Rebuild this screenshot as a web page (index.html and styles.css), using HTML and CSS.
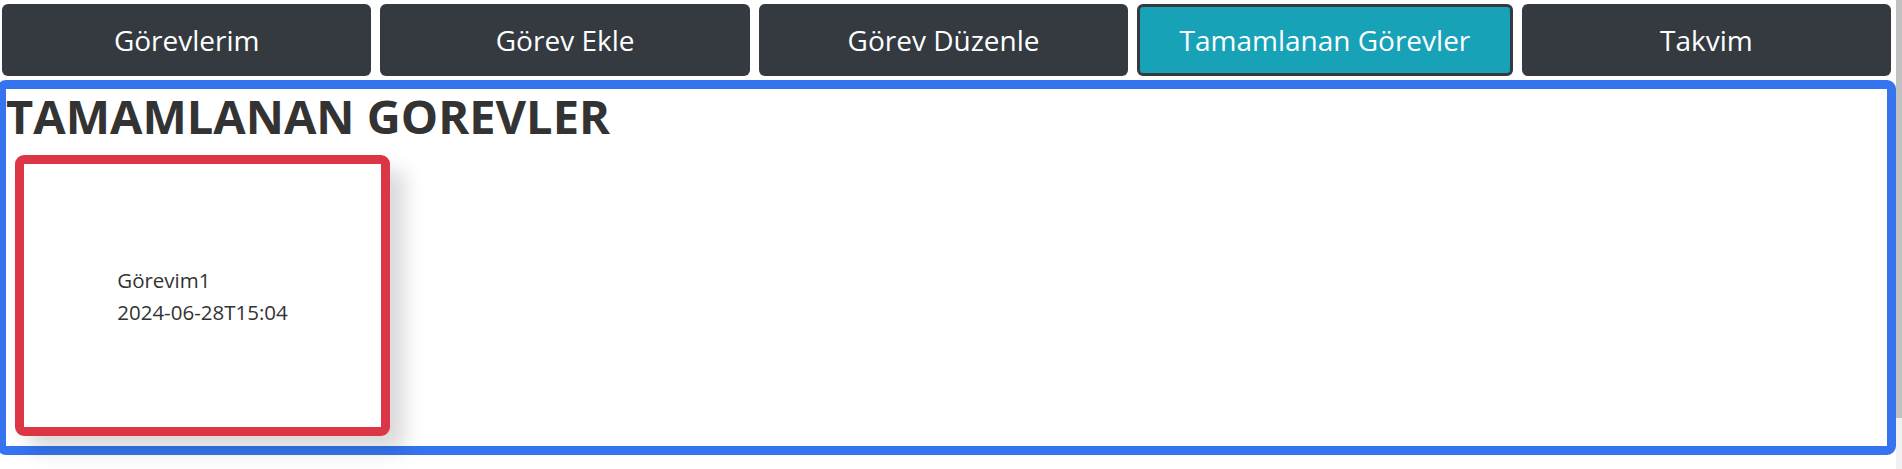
FILE: index.html
```html
<!DOCTYPE html>
<html lang="tr">
<head>
<meta charset="utf-8">
<title>Tamamlanan Görevler</title>
<link rel="stylesheet" href="styles.css">
</head>
<body>
<nav class="nav">
  <a class="nav-btn" href="#">Görevlerim</a>
  <a class="nav-btn" href="#">Görev Ekle</a>
  <a class="nav-btn" href="#">Görev Düzenle</a>
  <a class="nav-btn active" href="#">Tamamlanan Görevler</a>
  <a class="nav-btn" href="#">Takvim</a>
</nav>
<main class="panel">
  <h1 class="title">TAMAMLANAN GOREVLER</h1>
  <div class="cards">
    <div class="card">
      <div class="card-body">
        <div class="card-line">Görevim1</div>
        <div class="card-line">2024-06-28T15:04</div>
      </div>
    </div>
  </div>
</main>
<div class="scrollbar" aria-hidden="true"><div class="scrollbar-thumb"></div></div>
</body>
</html>
```

FILE: styles.css
```css
html {
  background: #fff;
  overflow: hidden;
}
body {
  margin: 0;
  padding-right: 6px;
  font-family: "Open Sans", "Liberation Sans", sans-serif;
  color: #333;
}
.nav {
  display: flex;
  gap: 9px;
  padding: 4px 5px 0 2px;
}
.nav-btn {
  flex: 1;
  height: 72px;
  box-sizing: border-box;
  display: flex;
  align-items: center;
  justify-content: center;
  background: #343a40;
  color: #fff;
  font-size: 28px;
  text-decoration: none;
  border-radius: 6px;
}
.nav-btn.active {
  background: #17a2b8;
  border: 3px solid #343a40;
}
.panel {
  margin: 4px 0 71px -3px;
  border: 9px solid #3673ee;
  border-radius: 9px;
  padding: 3px 0 10px 0;
}
.title {
  margin: 0;
  font-size: 47px;
  line-height: 48px;
  font-weight: 700;
  color: #333;
}
.cards {
  display: flex;
  margin-top: 15px;
  padding-left: 9px;
}
.card {
  width: 375px;
  height: 281px;
  box-sizing: border-box;
  border: 9px solid #dc3545;
  border-radius: 9px;
  background: #fff;
  box-shadow: 15px 15px 20px rgba(0, 0, 0, 0.15);
  display: flex;
  align-items: center;
  justify-content: center;
}
.card-line {
  font-size: 20.5px;
  line-height: 32px;
  color: #333;
}
.scrollbar {
  position: fixed;
  top: 0;
  right: 0;
  width: 6px;
  height: 100vh;
  background: #f0f0f0;
}
.scrollbar-thumb {
  height: 418px;
  background: #c1c1c1;
}
```
